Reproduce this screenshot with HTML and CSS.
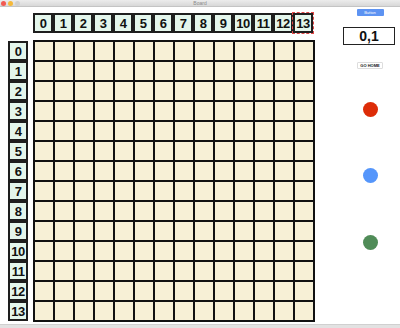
FILE: index.html
```html
<!DOCTYPE html>
<html lang="en">

<head>
    <meta charset="UTF-8">
    <meta name="viewport" content="width=device-width, initial-scale=1.0">
    <title>Board</title>
    <link rel="stylesheet" href="styles.css">
</head>

<body>
    <div class="title-bar">
        <div class="lights">
            <span class="light red"></span>
            <span class="light yellow"></span>
            <span class="light gray"></span>
        </div>
        <span class="title">Board</span>
    </div>

    <div class="window">
        <div class="board-area">
            <div class="corner"></div>
            <div class="col-headers" id="colHeaders"></div>
            <div class="row-headers" id="rowHeaders"></div>
            <div class="board" id="board"></div>
        </div>

        <div class="side-panel">
            <button class="small-button">Button</button>
            <div class="coords">0,1</div>
            <button class="home-button">GO HOME</button>
            <div class="dot dot-red"></div>
            <div class="dot dot-blue"></div>
            <div class="dot dot-green"></div>
        </div>
    </div>

    <div class="bottom-edge"></div>

    <script>
        // build the 14x14 board and its labels
        const size = 14;
        const colHeaders = document.getElementById('colHeaders');
        const rowHeaders = document.getElementById('rowHeaders');
        const board = document.getElementById('board');

        for (let i = 0; i < size; i++) {
            const col = document.createElement('div');
            col.className = 'label';
            if (i === size - 1) col.classList.add('selected');
            col.textContent = i;
            colHeaders.appendChild(col);

            const row = document.createElement('div');
            row.className = 'label';
            row.textContent = i;
            rowHeaders.appendChild(row);
        }

        for (let i = 0; i < size * size; i++) {
            const cell = document.createElement('div');
            cell.className = 'cell';
            board.appendChild(cell);
        }
    </script>
</body>

</html>
```

FILE: styles.css
```css
body {
    font-family: "Liberation Sans", Arial, sans-serif;
    margin: 0;
    width: 400px;
    height: 328px;
    display: flex;
    flex-direction: column;
    background: #fff;
    color: #111;
    overflow: hidden;
}

.title-bar {
    height: 7px;
    background: linear-gradient(#ececec, #d8d8d8);
    border-bottom: 1px solid #c4c4c4;
    box-sizing: border-box;
    display: flex;
    align-items: center;
    justify-content: center;
    position: relative;
}

.lights {
    position: absolute;
    left: 1px;
    top: 1px;
    display: flex;
    gap: 2px;
}

.light {
    width: 5px;
    height: 5px;
    border-radius: 50%;
}

.light.red {
    background: #f25a52;
}

.light.yellow {
    background: #f5b93a;
}

.light.gray {
    background: #d0d0d0;
}

.title {
    font-size: 5px;
    color: #8a8a8a;
    line-height: 6px;
}

.window {
    flex: 1;
    display: flex;
}

.board-area {
    display: grid;
    grid-template-columns: 20px 282px;
    grid-template-rows: 20px auto;
    column-gap: 5px;
    row-gap: 8px;
    padding: 6px 0 0 8px;
    align-content: start;
}

.col-headers {
    display: flex;
}

.row-headers {
    display: flex;
    flex-direction: column;
}

.label {
    width: 20px;
    height: 20px;
    box-sizing: border-box;
    border: 2px solid #1e1e1e;
    background: #e4f6ec;
    font-size: 13px;
    font-weight: bold;
    display: flex;
    align-items: center;
    justify-content: center;
    letter-spacing: -0.5px;
}

.label.selected {
    outline: 1px dashed #e04848;
    outline-offset: 0;
}

.board {
    display: grid;
    grid-template-columns: repeat(14, 20px);
    grid-auto-rows: 20px;
    border-left: 2px solid #111;
    border-top: 2px solid #111;
    width: max-content;
    margin-top: -1px;
}

.cell {
    box-sizing: border-box;
    border-right: 2px solid #111;
    border-bottom: 2px solid #111;
    background: #f7f0d6;
}

.side-panel {
    width: 60px;
    margin-left: auto;
    display: flex;
    flex-direction: column;
    align-items: center;
    padding-top: 2px;
}

.small-button {
    width: 27px;
    height: 7px;
    padding: 0;
    border: none;
    border-radius: 1px;
    background: #5d93f2;
    color: #fff;
    font-family: inherit;
    font-size: 4px;
    line-height: 7px;
}

.coords {
    margin-top: 11px;
    width: 52px;
    height: 18px;
    box-sizing: border-box;
    border: 1.5px solid #222;
    font-size: 14px;
    font-weight: bold;
    display: flex;
    align-items: center;
    justify-content: center;
    margin-right: 2px;
}

.home-button {
    margin-top: 17px;
    height: 7px;
    padding: 0 2px;
    border: 1px solid #ddd;
    border-radius: 1px;
    background: #fff;
    color: #111;
    font-family: inherit;
    font-size: 4px;
    font-weight: bold;
    line-height: 5px;
}

.dot {
    width: 15px;
    height: 15px;
    border-radius: 50%;
}

.dot-red {
    margin-top: 33px;
    background: #dd2c08;
}

.dot-blue {
    margin-top: 51px;
    background: #5596fb;
}

.dot-green {
    margin-top: 52px;
    background: #508c58;
}

.bottom-edge {
    height: 3px;
    background: #e2e2e2;
    border-top: 1px solid #d0d0d0;
}
```
